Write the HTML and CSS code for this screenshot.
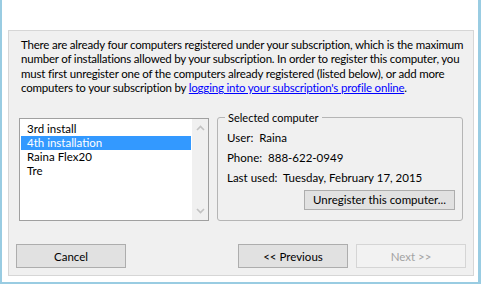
FILE: index.html
```html
<!DOCTYPE html>
<html lang="en">
<head>
<meta charset="UTF-8">
<title>Register computer</title>
<link rel="stylesheet" href="styles.css">
</head>
<body>

<div class="window">
    <div class="panel">
        <p class="intro">There are already four computers registered under your subscription, which is the maximum number of installations allowed by your subscription. In order to register this computer, you must first unregister one of the computers already registered (listed below), or add more computers to your subscription by <a href="#">logging into your subscription's profile online</a>.</p>

        <div class="middle">
            <div class="listbox">
                <ul class="items">
                    <li>3rd install</li>
                    <li class="selected">4th installation</li>
                    <li>Raina Flex20</li>
                    <li>Tre</li>
                </ul>
                <div class="scrollbar">
                    <svg width="9" height="6" viewBox="0 0 9 6"><path d="M1 5 L4.5 1.5 L8 5" fill="none" stroke="#c2c2c2" stroke-width="1.6"/></svg>
                    <svg width="9" height="6" viewBox="0 0 9 6"><path d="M1 1 L4.5 4.5 L8 1" fill="none" stroke="#c2c2c2" stroke-width="1.6"/></svg>
                </div>
            </div>

            <fieldset class="group">
                <legend>Selected computer</legend>
                <div class="row">User:&nbsp; Raina</div>
                <div class="row">Phone:&nbsp; 888-622-0949</div>
                <div class="row">Last used:&nbsp; Tuesday, February 17, 2015</div>
                <div class="group-actions">
                    <button class="btn btn-wide">Unregister this computer...</button>
                </div>
            </fieldset>
        </div>

        <div class="actions">
            <button class="btn">Cancel</button>
            <div class="nav">
                <button class="btn">&lt;&lt; Previous</button>
                <button class="btn" disabled>Next &gt;&gt;</button>
            </div>
        </div>
    </div>
</div>

</body>
</html>
```

FILE: styles.css
```css
body {
    margin: 0;
    padding: 0;
    background-color: #ffffff;
    font-family: Lato, "Noto Sans", sans-serif;
    font-size: 11px;
    color: #000000;
}

.window {
    box-sizing: border-box;
    width: 481px;
    height: 284px;
    padding: 30px 0 0 6px;
    border-left: 2px solid #99cce2;
    border-right: 3px solid #99cce2;
    border-bottom: 2px solid #99cce2;
    background-color: #ffffff;
}

.panel {
    box-sizing: border-box;
    width: 466px;
    height: 246px;
    border: 1px solid #d6d6d6;
    background-color: #f0f0f0;
    display: flex;
    flex-direction: column;
}

.intro {
    margin: 7px 8px 0 12px;
    font-size: 11.5px;
    letter-spacing: -0.2px;
    line-height: 14.4px;
}

.intro a {
    color: #0000ff;
}

.middle {
    display: flex;
    align-items: flex-start;
    gap: 8px;
    margin: 22px 10px 0 10px;
}

/* list of registered computers */
.listbox {
    box-sizing: border-box;
    width: 190px;
    height: 103px;
    border: 1px solid #a0a0a0;
    background-color: #ffffff;
    display: flex;
}

.items {
    flex: 1;
    list-style: none;
    margin: 0;
    padding: 3px 1px 0 1px;
}

.items li {
    height: 14px;
    line-height: 14px;
    padding-left: 6px;
    font-size: 11.5px;
}

.items li.selected {
    background-color: #3399ff;
    color: #ffffff;
}

.scrollbar {
    width: 16px;
    background-color: #f0f0f0;
    display: flex;
    flex-direction: column;
    justify-content: space-between;
    align-items: center;
    padding: 6px 0 6px 0;
}

.scrollbar svg {
    display: block;
}

/* group box on the right */
.group {
    box-sizing: border-box;
    width: 246px;
    height: 110px;
    margin: -7px 0 0 0;
    padding: 3px 9px 0 9px;
    border: 1px solid #b5b5b5;
    border-radius: 3px;
}

.group legend {
    padding: 0 3px;
    margin-left: -2px;
    line-height: 14px;
}

.row {
    height: 20px;
    line-height: 20px;
    font-size: 11.5px;
}

.group-actions {
    display: flex;
    justify-content: flex-end;
    margin-top: 2px;
    margin-right: -2px;
}

.btn {
    box-sizing: border-box;
    width: 110px;
    height: 24px;
    border: 1px solid #adadad;
    background-color: #e1e1e1;
    font-family: inherit;
    font-size: 11.5px;
    color: #000000;
    padding: 0;
    white-space: nowrap;
}

.btn-wide {
    width: 151px;
    height: 20px;
}

.btn:disabled {
    border-color: #d5d5d5;
    background-color: #f2f2f2;
    color: #a3a3a3;
}

.actions {
    display: flex;
    justify-content: space-between;
    margin: auto 7px 7px 7px;
}

.nav {
    display: flex;
    gap: 8px;
}
```
